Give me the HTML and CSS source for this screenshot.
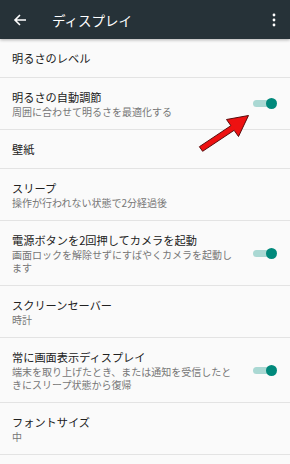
FILE: index.html
```html
<!DOCTYPE html>
<html lang="ja">
<head>
<meta charset="utf-8">
<link rel="stylesheet" href="styles.css">
</head>
<body>
<header class="appbar">
  <svg class="back" width="16" height="16" viewBox="0 0 16 16"><path d="M14 8H3.5M8 3L3 8l5 5" fill="none" stroke="#fff" stroke-width="1.6"/></svg>
  <span class="title">ディスプレイ</span>
  <svg class="more" width="6" height="16" viewBox="0 0 6 16"><circle cx="3" cy="3" r="1.4" fill="#fff"/><circle cx="3" cy="8" r="1.4" fill="#fff"/><circle cx="3" cy="13" r="1.4" fill="#fff"/></svg>
</header>
<main class="list">
  <div class="row"><div class="text"><div class="t">明るさのレベル</div></div></div>
  <div class="row"><div class="text"><div class="t">明るさの自動調節</div><div class="s">周囲に合わせて明るさを最適化する</div></div><div class="sw"><span class="track"></span><span class="thumb"></span></div></div>
  <div class="row"><div class="text"><div class="t">壁紙</div></div></div>
  <div class="row"><div class="text"><div class="t">スリープ</div><div class="s">操作が行われない状態で2分経過後</div></div></div>
  <div class="row"><div class="text"><div class="t">電源ボタンを2回押してカメラを起動</div><div class="s">画面ロックを解除せずにすばやくカメラを起動します</div></div><div class="sw"><span class="track"></span><span class="thumb"></span></div></div>
  <div class="row"><div class="text"><div class="t">スクリーンセーバー</div><div class="s">時計</div></div></div>
  <div class="row"><div class="text"><div class="t">常に画面表示ディスプレイ</div><div class="s">端末を取り上げたとき、または通知を受信したときにスリープ状態から復帰</div></div><div class="sw"><span class="track"></span><span class="thumb"></span></div></div>
  <div class="row"><div class="text"><div class="t">フォントサイズ</div><div class="s">中</div></div></div>
</main>
<svg class="arrow" width="290" height="464" viewBox="0 0 290 464">
  <polygon points="248.5,115.5 226.5,119.5 230.9,125.7 199.4,146.7 202.6,151.3 234.1,130.3 238.5,136.5" fill="#ee1111" stroke="#5a0a0a" stroke-width="1" stroke-linejoin="miter"/>
</svg>
</body>
</html>
```

FILE: styles.css
```css
html, body {
  margin: 0;
  padding: 0;
}
body {
  width: 290px;
  height: 464px;
  overflow: hidden;
  background: #fafafa;
  font-family: "Noto Sans CJK JP", "Noto Sans", sans-serif;
  position: relative;
}
.appbar {
  height: 39px;
  background: #263238;
  display: flex;
  align-items: center;
  box-shadow: 0 1px 3px rgba(0, 0, 0, 0.3);
  position: relative;
  z-index: 1;
}
.back {
  margin-left: 12px;
}
.title {
  margin-left: 24px;
  color: #fff;
  font-size: 13.5px;
  flex: 1;
}
.more {
  margin-right: 13px;
}
.list {
  display: flex;
  flex-direction: column;
}
.row {
  display: flex;
  align-items: center;
  padding: 11px 0 11px 12px;
  border-bottom: 1px solid #e3e3e3;
}
.text {
  width: 224px;
}
.t {
  font-size: 11.2px;
  line-height: 16px;
  color: #212121;
}
.s {
  font-size: 10px;
  line-height: 13px;
  color: #767676;
}
.sw {
  position: relative;
  width: 24px;
  height: 11px;
  margin-left: 17px;
}
.track {
  position: absolute;
  left: 0;
  top: 2px;
  width: 20px;
  height: 7px;
  border-radius: 4px;
  background: #aad8d3;
}
.thumb {
  position: absolute;
  right: 0;
  top: 0;
  width: 11px;
  height: 11px;
  border-radius: 50%;
  background: #00897b;
}
.arrow {
  position: absolute;
  left: 0;
  top: 0;
  pointer-events: none;
  z-index: 2;
}
```
